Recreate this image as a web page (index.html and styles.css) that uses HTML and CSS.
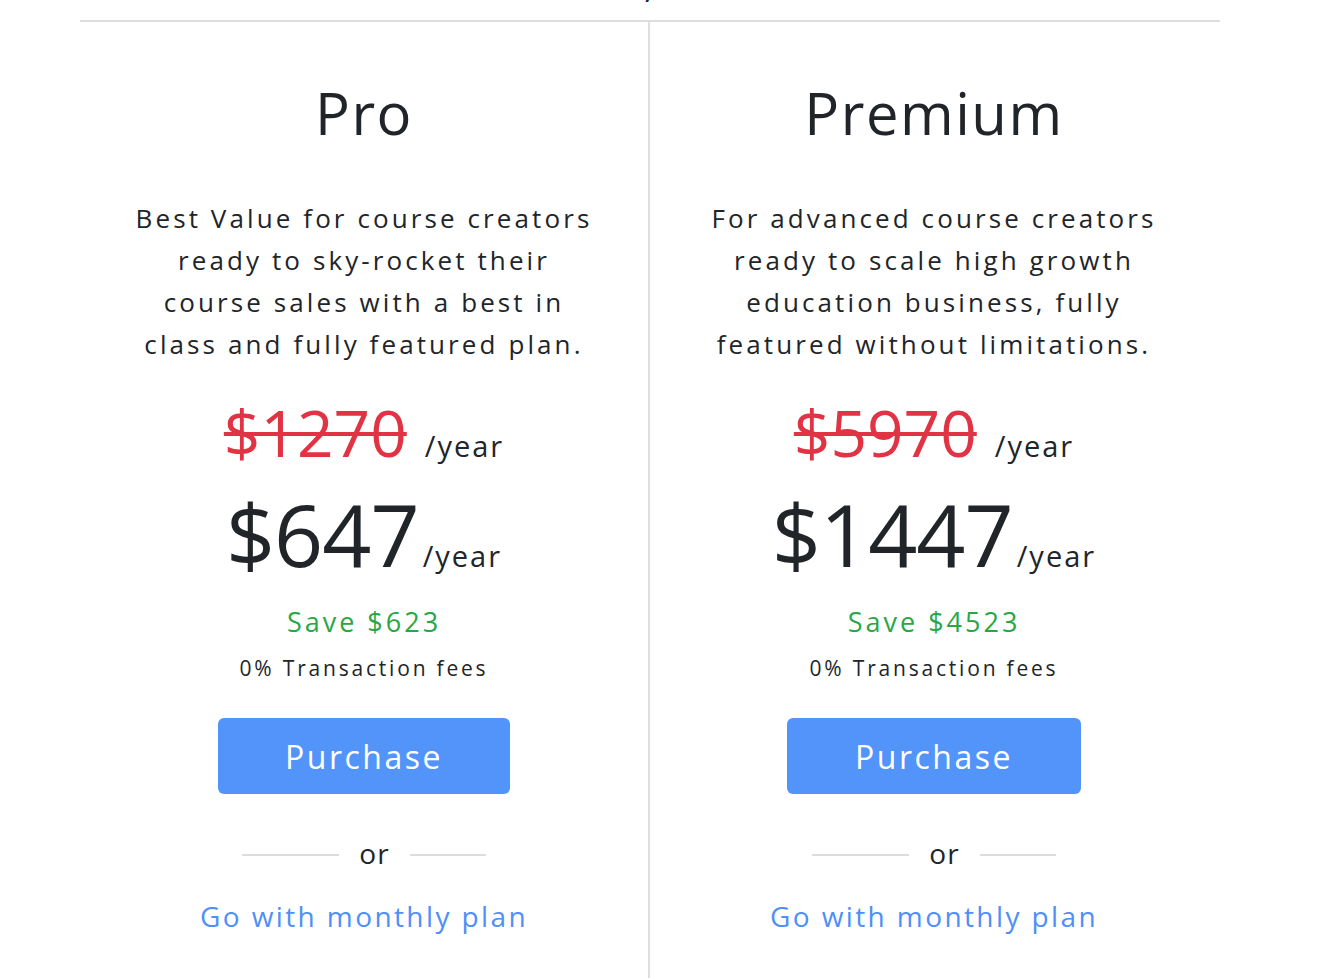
FILE: index.html
```html
<!DOCTYPE html>
<html lang="en">
<head>
<meta charset="utf-8">
<title>Pricing</title>
<link rel="stylesheet" href="styles.css">
</head>
<body>
<div class="page">
  <div class="top-cut"><span class="top-cut-text">,</span></div>
  <div class="plans">
    <section class="plan">
      <h2 class="plan-title">Pro</h2>
      <p class="plan-desc">Best Value for course creators<br>ready to sky-rocket their<br>course sales with a best in<br>class and fully featured plan.</p>
      <div class="old-price"><span class="old-amount">$1270</span><span class="per-old">/year</span></div>
      <div class="new-price"><span class="new-amount">$647</span><span class="per-new">/year</span></div>
      <div class="save">Save $623</div>
      <div class="fees">0% Transaction fees</div>
      <button class="purchase purchase-pro">Purchase</button>
      <div class="or-row"><span class="or-line or-left"></span><span class="or-text">or</span><span class="or-line or-right"></span></div>
      <a class="monthly" href="#">Go with monthly plan</a>
    </section>
    <section class="plan plan-right">
      <h2 class="plan-title">Premium</h2>
      <p class="plan-desc">For advanced course creators<br>ready to scale high growth<br>education business, fully<br>featured without limitations.</p>
      <div class="old-price"><span class="old-amount">$5970</span><span class="per-old">/year</span></div>
      <div class="new-price"><span class="new-amount">$1447</span><span class="per-new">/year</span></div>
      <div class="save">Save $4523</div>
      <div class="fees">0% Transaction fees</div>
      <button class="purchase purchase-premium">Purchase</button>
      <div class="or-row"><span class="or-line or-left"></span><span class="or-text">or</span><span class="or-line or-right"></span></div>
      <a class="monthly" href="#">Go with monthly plan</a>
    </section>
  </div>
</div>
</body>
</html>
```

FILE: styles.css
```css
html, body {
  margin: 0;
  padding: 0;
  background: #ffffff;
}
body {
  font-family: "Open Sans", "Liberation Sans", sans-serif;
  color: #212529;
}
.page {
  width: 1140px;
  margin-left: 80px;
}
.top-cut {
  height: 20px;
  overflow: hidden;
  position: relative;
}
.top-cut-text {
  position: absolute;
  left: 564px;
  top: -38px;
  font-size: 40px;
  line-height: 40px;
  color: #212529;
}
.plans {
  display: grid;
  grid-template-columns: 568px 570px;
  border-top: 2px solid #dedede;
}
.plan {
  display: flex;
  flex-direction: column;
  align-items: center;
  padding-top: 55px;
  padding-bottom: 60px;
}
.plan-right {
  border-left: 2px solid #dedede;
}
.plan-title {
  margin: 0;
  font-size: 58px;
  line-height: 72px;
  font-weight: 400;
  letter-spacing: 1.5px;
}
.plan-desc {
  margin: 48px 0 0;
  font-size: 26px;
  line-height: 42px;
  letter-spacing: 3.1px;
  text-align: center;
}
.old-price {
  margin-top: 33px;
  display: flex;
  align-items: baseline;
  height: 70px;
  line-height: 70px;
}
.old-amount {
  font-size: 64px;
  color: #e03444;
  text-decoration: line-through;
  text-decoration-thickness: 4px;
  letter-spacing: 0;
}
.per-old {
  margin-left: 18px;
  font-size: 29px;
  letter-spacing: 2px;
}
.new-price {
  margin-top: 21px;
  display: flex;
  align-items: baseline;
  height: 90px;
  line-height: 90px;
}
.new-amount {
  font-size: 86px;
  letter-spacing: -1px;
}
.per-new {
  margin-left: 4px;
  font-size: 29px;
  letter-spacing: 2px;
}
.save {
  margin-top: 28px;
  font-size: 27px;
  line-height: 30px;
  color: #28a745;
  letter-spacing: 3px;
}
.fees {
  margin-top: 19px;
  font-size: 21px;
  line-height: 24px;
  letter-spacing: 2.8px;
}
.purchase {
  margin-top: 38px;
  width: 292px;
  height: 76px;
  border: 0;
  border-radius: 6px;
  background: #5294fa;
  color: #ffffff;
  font-family: inherit;
  font-size: 32px;
  letter-spacing: 2.5px;
  cursor: pointer;
}
.purchase-premium {
  width: 294px;
}
.or-row {
  margin-top: 40px;
  height: 40px;
  display: flex;
  align-items: center;
  gap: 20px;
}
.or-line {
  display: block;
  height: 2px;
  margin-top: 2px;
  background: #dcdcdc;
}
.or-left {
  width: 97px;
}
.or-right {
  width: 76px;
}
.or-text {
  font-size: 28px;
  line-height: 36px;
  letter-spacing: 1px;
  margin-top: -2px;
}
.monthly {
  margin-top: 25px;
  font-size: 28px;
  line-height: 34px;
  color: #4f8ff7;
  text-decoration: none;
  letter-spacing: 2.4px;
}
```
